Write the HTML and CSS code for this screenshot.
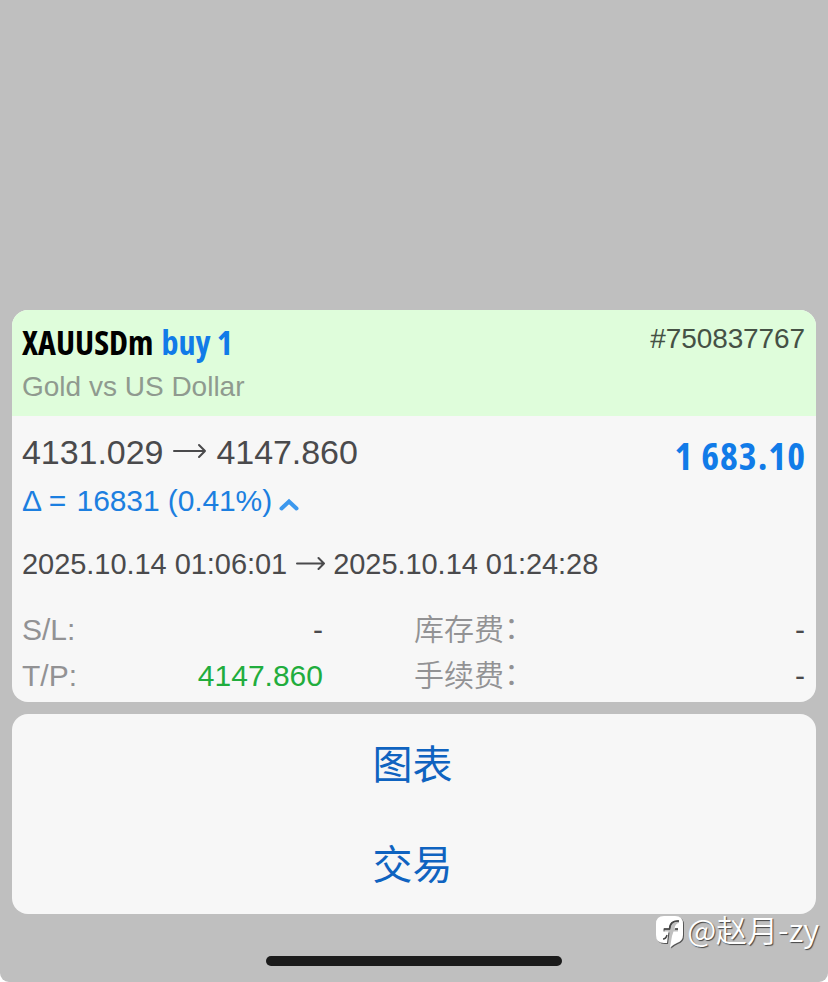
FILE: index.html
```
<!DOCTYPE html>
<html lang="zh-CN">
<head>
    <meta charset="UTF-8">
    <meta name="viewport" content="width=device-width, initial-scale=1.0">
    <title>XAUUSDm</title>
    <link rel="stylesheet" href="styles.css">
</head>
<body>

    <div class="screen">
        <div class="card deal">
            <div class="deal-header">
                <div>
                    <h1><span class="symbol">XAUUSDm</span><span class="side">buy 1</span></h1>
                    <p class="name">Gold vs US Dollar</p>
                </div>
                <span class="ticket">#750837767</span>
            </div>

            <div class="deal-body">
                <div class="summary">
                    <div class="prices">
                        <span>4131.029</span>
                        <svg class="arrow" width="34" height="18" viewBox="0 0 34 18"><path d="M1 8H32M26 2L32 8L26 14"/></svg>
                        <span>4147.860</span>
                    </div>
                    <span class="profit">1 683.10</span>
                </div>

                <div class="delta">
                    <span>Δ = <span class="points">16831 (0.41%)</span></span>
                    <svg width="20" height="14" viewBox="0 0 20 14"><path d="M2.5 11.5L10 4.5L17.5 11.5"/></svg>
                </div>

                <div class="dates">
                    <span>2025.10.14 01:06:01</span>
                    <svg class="arrow" width="30" height="16" viewBox="0 0 30 16"><path d="M2 7.5H29M23.5 2L29 7.5L23.5 13"/></svg>
                    <span>2025.10.14 01:24:28</span>
                </div>

                <div class="details">
                    <div class="row"><span class="label">S/L:</span><span>-</span></div>
                    <div class="row"><span class="label cjk">库存费<span class="colon">：</span></span><span>-</span></div>
                    <div class="row"><span class="label">T/P:</span><span class="hit">4147.860</span></div>
                    <div class="row"><span class="label cjk">手续费<span class="colon">：</span></span><span>-</span></div>
                </div>
            </div>
        </div>

        <div class="card menu">
            <button>图表</button>
            <button>交易</button>
        </div>

        <div class="home-bar"></div>

        <div class="watermark">
            <svg width="32" height="36" viewBox="0 0 32 36">
                <path class="logo" d="M9 3H20Q28 3 28 11V22Q28 28 22 30Q19 31 15 34.5L17 23L18.500 18.500H23V15.500H19.500Q20 10.500 24 10V7.500Q15 6.500 14 15.500H8.500V18.500H13.500L12 30H9Q1 30 1 22V11Q1 3 9 3Z"/>
                <path class="mark-shade" d="M24 8Q15 7 14.500 16H9M23 16H20M8 26Q11 26 12 22"/>
            </svg>
            <span>@赵月-zy</span>
        </div>
    </div>

</body>
</html>
```
FILE: styles.css
```
* {
    box-sizing: border-box;
}

body {
    margin: 0;
    background-color: #fff;
    font-family: "Liberation Sans", "Noto Sans CJK SC", sans-serif;
    color: #4a4a4c;
}

.screen {
    position: relative;
    display: flex;
    flex-direction: column;
    height: 982px;
    padding: 310px 12px 0;
    background-color: #bfbfbf;
    border-radius: 0 0 9px 9px;
}

.card {
    flex: none;
    background-color: #f7f7f7;
    border-radius: 16px;
    overflow: hidden;
}

.deal {
    height: 392px;
}

.deal-header {
    display: flex;
    justify-content: space-between;
    height: 106px;
    padding: 12px 11px 0 10px;
    background-color: #dffddb;
}

h1 {
    display: flex;
    gap: 8px;
    margin: 0;
    font-family: "Open Sans", sans-serif;
    font-size: 34px;
    font-stretch: 75%;
    font-weight: 700;
    line-height: 41px;
    color: #000;
}

.side {
    color: #117be8;
}

.name {
    margin: 8px 0 0;
    font-size: 28px;
    line-height: 32px;
    color: #8f9a8f;
}

.ticket {
    margin-top: 1px;
    font-size: 28px;
    letter-spacing: -0.1px;
    line-height: 32px;
    color: #455145;
}

.deal-body {
    padding: 16px 11px 0 10px;
}

.summary {
    display: flex;
    justify-content: space-between;
    height: 48px;
}

.prices,
.delta,
.dates {
    display: flex;
    align-items: center;
}

.prices {
    gap: 9.5px;
    height: 40px;
    font-size: 34px;
    letter-spacing: -0.05px;
}

.arrow {
    fill: none;
    stroke: #4a4a4c;
    stroke-width: 2;
    stroke-linecap: round;
    stroke-linejoin: round;
}

.profit {
    margin-right: -1px;
    font-family: "Open Sans", sans-serif;
    font-size: 38px;
    font-stretch: 75%;
    font-weight: 670;
    letter-spacing: 1px;
    line-height: 46px;
    color: #117be8;
}

.delta {
    gap: 7px;
    height: 42px;
    font-size: 30px;
    color: #1c7fe0;
}

.points {
    margin-left: 2px;
    letter-spacing: -0.1px;
}

.delta svg {
    margin-top: 5px;
}

.delta path {
    fill: none;
    stroke: #3c98ee;
    stroke-width: 4;
    stroke-linecap: round;
}

.dates {
    gap: 8px;
    height: 32px;
    margin-top: 26px;
    font-size: 29px;
    letter-spacing: -0.05px;
}

.details {
    display: grid;
    grid-template-columns: 301px 391px;
    column-gap: 91px;
    margin-top: 27px;
}

.row {
    display: flex;
    justify-content: space-between;
    height: 46px;
    font-size: 30px;
    line-height: 46px;
}

.label {
    color: #929294;
}

.cjk {
    font-family: "Noto Sans CJK SC", sans-serif;
    font-weight: 350;
    line-height: 41px;
}

.colon {
    position: relative;
    top: -2px;
}

.hit {
    color: #21ad3d;
}

.menu {
    display: flex;
    flex-direction: column;
    height: 200px;
    margin-top: 12px;
}

button {
    flex: 1;
    padding: 0 3px 5px 0;
    border: none;
    background: none;
    font-family: "Noto Sans CJK SC", sans-serif;
    font-size: 40px;
    color: #0f63c0;
}

.home-bar {
    flex: none;
    align-self: center;
    width: 296px;
    height: 10px;
    margin-top: 42px;
    border-radius: 5px;
    background-color: #1b1b1b;
}

/* Sits over the bottom edge of the screen */
.watermark {
    position: absolute;
    right: 9px;
    bottom: 32px;
    display: flex;
    align-items: center;
    height: 44px;
    font-family: "Noto Sans CJK SC", sans-serif;
    font-size: 31px;
    font-weight: 350;
    white-space: nowrap;
    color: #fff;
    text-shadow: 1px 1px 1px #444;
}

.watermark svg {
    margin-top: 5px;
}

.logo {
    fill: #fff;
    filter: drop-shadow(1px 1px 0 #555);
}

.mark-shade {
    fill: none;
    stroke: #444;
    stroke-width: 1.5;
}
```
